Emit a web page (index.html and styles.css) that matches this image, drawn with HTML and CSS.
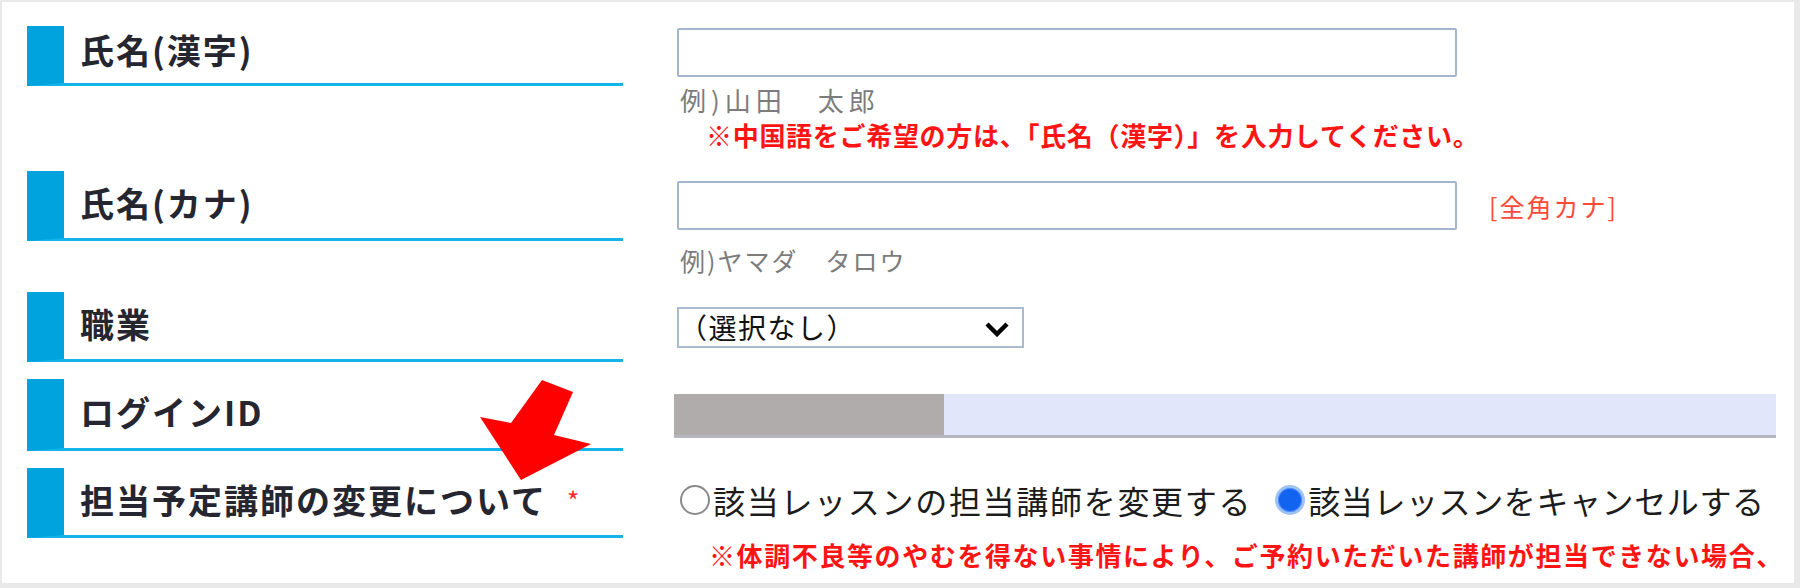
FILE: index.html
```html
<!DOCTYPE html>
<html lang="ja">

<head>
    <meta charset="UTF-8">
    <meta name="viewport" content="width=device-width, initial-scale=1.0">
    <title>会員情報</title>
    <link rel="stylesheet" href="styles.css">
</head>

<body>
    <div class="page">
        <div class="row row-kanji">
            <div class="label label-short"><span>氏名(漢字)</span></div>
            <div class="field">
                <input type="text" class="text-input">
                <p class="hint">例)山田　太郎</p>
                <p class="note note-kanji">※中国語をご希望の方は、「氏名（漢字）」を入力してください。</p>
            </div>
        </div>

        <div class="row row-kana">
            <div class="label"><span>氏名(カナ)</span></div>
            <div class="field">
                <div class="input-line">
                    <input type="text" class="text-input">
                    <span class="hint-red">[全角カナ]</span>
                </div>
                <p class="hint hint-kana">例)ヤマダ　タロウ</p>
            </div>
        </div>

        <div class="row row-job">
            <div class="label"><span>職業</span></div>
            <div class="field">
                <div class="select-box">
                    <span class="select-text">（選択なし）</span>
                    <svg class="chevron" width="26" height="16" viewBox="0 0 26 16">
                        <polyline points="3,3 13,13 23,3" fill="none" stroke="#000" stroke-width="4.5" />
                    </svg>
                </div>
            </div>
        </div>

        <div class="row row-login">
            <div class="label"><span>ログインID</span></div>
            <div class="field">
                <div class="login-bar">
                    <div class="login-mask"></div>
                </div>
            </div>
        </div>

        <div class="row row-teacher">
            <div class="label"><span>担当予定講師の変更について</span><em class="required">*</em></div>
            <div class="field">
                <div class="radios">
                    <label class="radio radio-change"><span class="dot"></span>該当レッスンの担当講師を変更する</label>
                    <label class="radio radio-cancel checked"><span class="dot"></span>該当レッスンをキャンセルする</label>
                </div>
                <p class="note note-teacher">※体調不良等のやむを得ない事情により、ご予約いただいた講師が担当できない場合、</p>
            </div>
        </div>

        <svg class="arrow" width="116" height="106" viewBox="0 0 116 106">
            <polygon points="64,2 95,14 76,57 113,66 43,102 2,39 33,45" fill="#ff0000" />
        </svg>
    </div>
</body>

</html>
```

FILE: styles.css
```css
body,
p {
    margin: 0;
    padding: 0;
}

body {
    background: #e9e9e9;
    font-family: "Noto Sans CJK JP", "Noto Sans", sans-serif;
    color: #222;
}

.page {
    position: relative;
    height: 581px;
    margin: 2px 6px 5px 2px;
    padding: 24px 0 0 25px;
    box-sizing: border-box;
    background: #fff;
    overflow: hidden;
}

.row {
    display: grid;
    grid-template-columns: 596px 1fr;
    column-gap: 54px;
    align-items: start;
    margin-bottom: 17px;
}

.row-kanji {
    margin-bottom: 21px;
}

/* 左の見出し */
.label {
    height: 70px;
    box-sizing: border-box;
    border-left: 37px solid #00a3dd;
    border-bottom: 3px solid #12b4ea;
    padding: 0 0 4px 16px;
    display: flex;
    align-items: center;
    font-size: 34px;
    font-weight: bold;
    letter-spacing: 2px;
    color: #262630;
}

.label-short {
    height: 60px;
    padding-bottom: 10px;
}

.required {
    font-style: normal;
    font-weight: normal;
    font-size: 26px;
    color: #ff2b2b;
    margin-left: 20px;
}

/* 右の入力欄 */
.field {
    min-width: 0;
}

.text-input {
    display: block;
    width: 780px;
    height: 49px;
    box-sizing: border-box;
    border: 2px solid #a3b6cb;
    border-radius: 2px;
    background: #fff;
}

.row-kanji .text-input {
    margin-top: 2px;
}

.input-line {
    display: flex;
    align-items: center;
}

.row-kana .field {
    padding-top: 10px;
}

.hint-red {
    margin-left: 32px;
    font-size: 25px;
    letter-spacing: 2px;
    color: #ff4a38;
}

.hint {
    margin-top: 8px;
    padding-left: 3px;
    line-height: 30px;
    font-size: 26px;
    letter-spacing: 5px;
    color: #7c7c7c;
}

.hint-kana {
    margin-top: 15px;
    font-size: 25px;
    letter-spacing: 2px;
}

.note {
    line-height: 30px;
    padding-left: 29px;
    font-size: 26px;
    font-weight: bold;
    color: #ff1414;
    white-space: nowrap;
}

.note-kanji {
    margin-top: 5px;
    letter-spacing: 0.7px;
}

.note-teacher {
    margin-top: 17px;
    padding-left: 32px;
    letter-spacing: 1.6px;
}

/* 職業 */
.row-job .field {
    padding-top: 15px;
}

.select-box {
    position: relative;
    display: flex;
    align-items: center;
    width: 347px;
    height: 41px;
    box-sizing: border-box;
    border: 2px solid #a9bccf;
    background: #fff;
}

.select-text {
    font-size: 28px;
    line-height: 37px;
    letter-spacing: 1.5px;
    color: #111;
}

.chevron {
    position: absolute;
    right: 12px;
    top: 12px;
}

/* ログインID */
.row-login .label {
    height: 72px;
}

.row-login .field {
    padding-top: 15px;
}

.login-bar {
    display: flex;
    height: 44px;
    margin-left: -3px;
    width: 1102px;
    box-sizing: border-box;
    background: #e2e6fa;
    border-bottom: 3px solid #b6b6be;
}

.login-mask {
    width: 270px;
    background: #afacab;
}

/* ラジオ */
.row-teacher .field {
    padding-top: 12px;
}

.radios {
    display: flex;
    align-items: center;
    height: 46px;
    line-height: 46px;
    margin-top: -3px;
    font-size: 32px;
    color: #1c1c1c;
    white-space: nowrap;
}

.radio {
    display: flex;
    align-items: center;
}

.radio-change {
    letter-spacing: 1.7px;
}

.radio-cancel {
    margin-left: 20px;
    letter-spacing: 0.6px;
}

.dot {
    width: 30px;
    height: 30px;
    box-sizing: border-box;
    border: 2px solid #8a8a8a;
    border-radius: 50%;
    margin: 0 3px;
    background: #fff;
}

.radio.checked .dot {
    border: 3px solid #9fc2f5;
    background: #1264f0;
    box-shadow: inset 0 0 0 1px #4f8cf6;
}

.arrow {
    position: absolute;
    left: 476px;
    top: 376px;
}
```
